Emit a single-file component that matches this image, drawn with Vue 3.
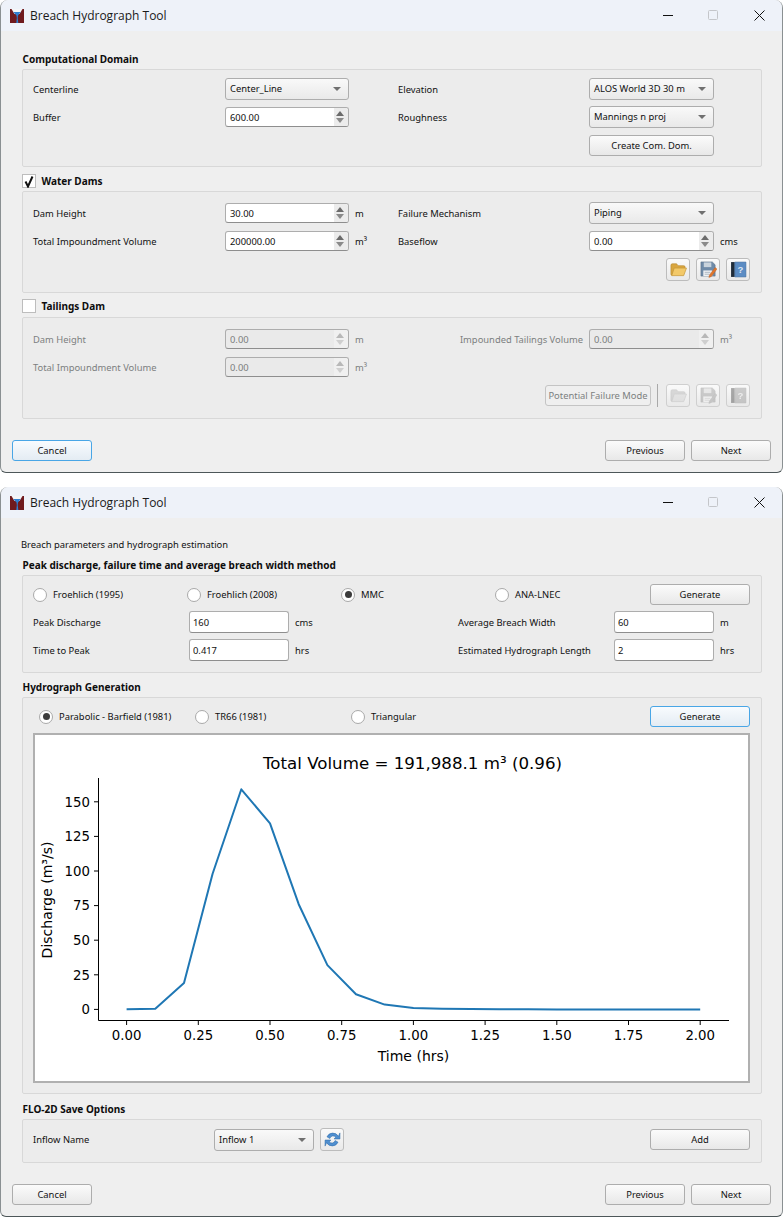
<script setup>
const points = [
  [0, 0.1], [0.1, 0.5], [0.2, 19], [0.3, 98], [0.4, 159], [0.5, 134.5], [0.6, 76], [0.7, 32],
  [0.8, 11], [0.9, 3.5], [1, 1], [1.1, 0.4], [1.2, 0.2], [1.3, 0.1], [1.4, 0.05], [1.5, 0],
  [1.6, 0], [1.7, 0], [1.8, 0], [1.9, 0], [2, 0],
]
const toX = (t) => 126.6 + 286.8 * t
const toY = (q) => 1009.4 - 1.384 * q
const linePoints = points.map(([t, q]) => `${toX(t).toFixed(1)},${toY(q).toFixed(1)}`).join(' ')
const xTicks = ['0.00', '0.25', '0.50', '0.75', '1.00', '1.25', '1.50', '1.75', '2.00']
const yTicks = [0, 25, 50, 75, 100, 125, 150]
const toolIcons = ['#ic-open', '#ic-save', '#ic-help']
const peakMethods = [
  { label: 'Froehlich (1995)', on: false },
  { label: 'Froehlich (2008)', on: false },
  { label: 'MMC', on: true },
  { label: 'ANA-LNEC', on: false },
]
const shapes = [
  { label: 'Parabolic - Barfield (1981)', on: true },
  { label: 'TR66 (1981)', on: false },
  { label: 'Triangular', on: false },
]
</script>

<template>
  <div class="page">
    <svg class="defs" width="0" height="0">
      <defs>
        <symbol id="ic-logo" viewBox="0 0 14 14">
          <path d="M0 0h14v14H0z" fill="#6f1a1e" />
          <path d="M1.5 0h11L9.5 5H4.500z" fill="#f4f6f8" />
          <path d="M3.200 3h7.600L8 6.500 7.700 9 8.300 14H6.300L6.800 9 6.500 6.500z" fill="#2f7fd0" />
        </symbol>
        <symbol id="ic-open" viewBox="0 0 18 16">
          <path d="M1 3.500Q1 2 2.500 2H7l1.500 2H14.500Q16 4 16 5.500V7H5L2.500 14H2Q1 14 1 13z" fill="#d9a63f" stroke="#b98a33" stroke-width=".7" />
          <path d="M4.500 6.500H17.500L14.500 14.500H1.800z" fill="#f3c969" stroke="#c29437" stroke-width=".7" />
        </symbol>
        <symbol id="ic-save" viewBox="0 0 18 18">
          <path d="M1 1h12l3 3v12H1z" fill="#6f8ba8" stroke="#5a6f86" stroke-width=".6" />
          <path d="M4 1.500h8v5H4z" fill="#c9d3dc" />
          <path d="M3.500 10h9.500v6H3.500z" fill="#eef1f4" />
          <path d="M5 12h6M5 14h5" stroke="#9aa7b4" stroke-width=".8" />
          <path d="M16 7l2 1.500-6 8-2.600 1 .6-2.800z" fill="#e0762b" stroke="#b9551a" stroke-width=".4" />
        </symbol>
        <symbol id="ic-help" viewBox="0 0 16 16">
          <path d="M1 1h3.500v14H1z" fill="#1f2c3a" />
          <path d="M4.500 1H15v14H4.500z" fill="#5b8cc4" stroke="#3f6a9c" stroke-width=".5" />
          <text x="9.700" y="11" font-size="9" font-family="Liberation Sans, sans-serif" font-weight="700" fill="#dbe7f4" text-anchor="middle">?</text>
        </symbol>
        <symbol id="ic-refresh" viewBox="0 0 16 16">
          <path d="M13.500 5A6 6 0 0 0 2.800 5.500L5.500 7A3.200 3.200 0 0 1 11 5.800L9.500 7.500H15V1.800z" fill="#4f8fd0" stroke="#2f6ba8" stroke-width=".5" />
          <path d="M2.500 11A6 6 0 0 0 13.200 10.500L10.500 9A3.200 3.200 0 0 1 5 10.200L6.500 8.500H1V14.200z" fill="#4f8fd0" stroke="#2f6ba8" stroke-width=".5" />
        </symbol>
      </defs>
    </svg>

    <!-- first wizard page -->
    <section class="window win-a">
      <header class="titlebar">
        <svg class="logo"><use href="#ic-logo" /></svg>
        <span class="title">Breach Hydrograph Tool</span>
        <div class="win-controls">
          <span class="ctl"><svg width="10" height="10"><path d="M0 5.500h10" stroke="#111" /></svg></span>
          <span class="ctl"><svg width="10" height="10"><rect x=".5" y=".5" width="9" height="9" rx="1" fill="none" stroke="#c4c6ca" /></svg></span>
          <span class="ctl"><svg width="11" height="11"><path d="M.5.500l10 10M10.500.500l-10 10" stroke="#111" /></svg></span>
        </div>
      </header>
      <div class="body body-a">
        <h3 class="head">Computational Domain</h3>
        <div class="group form-grid pad-first">
          <label>Centerline</label>
          <div class="combo">Center_Line</div>
          <span></span>
          <label>Elevation</label>
          <div class="combo">ALOS World 3D 30 m</div>
          <span></span>

          <label>Buffer</label>
          <div class="spin"><input value="600.00" readonly /><i class="arrows"></i></div>
          <span></span>
          <label>Roughness</label>
          <div class="combo">Mannings n proj</div>
          <span></span>

          <span class="skip"></span>
          <button class="btn create">Create Com. Dom.</button>
        </div>

        <div class="check-head first">
          <span class="check"><svg width="12" height="13"><path d="M2.500 6.500L5 11.500 9.500 1.500" fill="none" stroke="#111" stroke-width="2" /></svg></span>
          <h3>Water Dams</h3>
        </div>
        <div class="group form-grid pad-dam">
          <label>Dam Height</label>
          <div class="spin"><input value="30.00" readonly /><i class="arrows"></i></div>
          <span class="unit">m</span>
          <label>Failure Mechanism</label>
          <div class="combo">Piping</div>
          <span></span>

          <label>Total Impoundment Volume</label>
          <div class="spin"><input value="200000.00" readonly /><i class="arrows"></i></div>
          <span class="unit">m³</span>
          <label>Baseflow</label>
          <div class="spin"><input value="0.00" readonly /><i class="arrows"></i></div>
          <span class="unit">cms</span>

          <div class="tools">
            <button v-for="icon in toolIcons" :key="icon" class="tool"><svg><use :href="icon" /></svg></button>
          </div>
        </div>

        <div class="check-head second">
          <span class="check"></span>
          <h3>Tailings Dam</h3>
        </div>
        <div class="group form-grid pad-dam off">
          <label>Dam Height</label>
          <div class="spin"><input value="0.00" readonly /><i class="arrows"></i></div>
          <span class="unit">m</span>
          <label class="right">Impounded Tailings Volume</label>
          <div class="spin"><input value="0.00" readonly /><i class="arrows"></i></div>
          <span class="unit">m³</span>

          <label>Total Impoundment Volume</label>
          <div class="spin"><input value="0.00" readonly /><i class="arrows"></i></div>
          <span class="unit">m³</span>
          <span class="skip-rest"></span>

          <div class="tools">
            <button class="btn pfm">Potential Failure Mode</button>
            <span class="sep"></span>
            <button v-for="icon in toolIcons" :key="icon" class="tool"><svg><use :href="icon" /></svg></button>
          </div>
        </div>
      </div>
      <footer class="footer">
        <button class="btn nav focus">Cancel</button>
        <button class="btn nav push">Previous</button>
        <button class="btn nav">Next</button>
      </footer>
    </section>

    <!-- second wizard page -->
    <section class="window win-b">
      <header class="titlebar">
        <svg class="logo"><use href="#ic-logo" /></svg>
        <span class="title">Breach Hydrograph Tool</span>
        <div class="win-controls">
          <span class="ctl"><svg width="10" height="10"><path d="M0 5.500h10" stroke="#111" /></svg></span>
          <span class="ctl"><svg width="10" height="10"><rect x=".5" y=".5" width="9" height="9" rx="1" fill="none" stroke="#c4c6ca" /></svg></span>
          <span class="ctl"><svg width="11" height="11"><path d="M.5.500l10 10M10.500.500l-10 10" stroke="#111" /></svg></span>
        </div>
      </header>
      <div class="body body-b">
        <p class="intro">Breach parameters and hydrograph estimation</p>
        <h3 class="head">Peak discharge, failure time and average breach width method</h3>
        <div class="group peak">
          <div class="radio-row">
            <span v-for="m in peakMethods" :key="m.label" class="radio-item">
              <i class="radio" :class="{ on: m.on }"></i>{{ m.label }}
            </span>
            <button class="btn gen">Generate</button>
          </div>
          <div class="peak-grid">
            <label>Peak Discharge</label>
            <input class="line" value="160" readonly />
            <span class="unit">cms</span>
            <label>Average Breach Width</label>
            <input class="line" value="60" readonly />
            <span class="unit">m</span>

            <label>Time to Peak</label>
            <input class="line" value="0.417" readonly />
            <span class="unit">hrs</span>
            <label>Estimated Hydrograph Length</label>
            <input class="line" value="2" readonly />
            <span class="unit">hrs</span>
          </div>
        </div>

        <h3 class="head head-gen">Hydrograph Generation</h3>
        <div class="group hydro">
          <div class="radio-row shapes">
            <span v-for="s in shapes" :key="s.label" class="radio-item">
              <i class="radio" :class="{ on: s.on }"></i>{{ s.label }}
            </span>
            <button class="btn gen focus">Generate</button>
          </div>
          <div class="plot">
            <svg class="chart" viewBox="35 735 713 346" width="713" height="346">
              <text x="412.500" y="769" class="c-title" text-anchor="middle">Total Volume = 191,988.1 m³ (0.96)</text>
              <path d="M98.500 778V1020.500H729" fill="none" stroke="#000" />
              <g v-for="(tick, i) in xTicks" :key="tick">
                <path :d="`M${toX(i * 0.25).toFixed(1)} 1020.500v4.500`" stroke="#000" />
                <text :x="toX(i * 0.25)" y="1040" class="c-text" text-anchor="middle">{{ tick }}</text>
              </g>
              <g v-for="q in yTicks" :key="q">
                <path :d="`M98.500 ${toY(q).toFixed(1)}h-4.500`" stroke="#000" />
                <text x="90" :y="toY(q) + 4.800" class="c-text" text-anchor="end">{{ q }}</text>
              </g>
              <polyline :points="linePoints" fill="none" stroke="#1f77b4" stroke-width="2" stroke-linejoin="round" />
              <text x="413.500" y="1061" class="c-label" text-anchor="middle">Time (hrs)</text>
              <text transform="translate(52 900) rotate(-90)" class="c-label" text-anchor="middle">Discharge (m³/s)</text>
            </svg>
          </div>
        </div>

        <h3 class="head head-save">FLO-2D Save Options</h3>
        <div class="group save">
          <label>Inflow Name</label>
          <div class="combo inflow">Inflow 1</div>
          <button class="tool refresh"><svg><use href="#ic-refresh" /></svg></button>
          <button class="btn gen add">Add</button>
        </div>
      </div>
      <footer class="footer">
        <button class="btn nav">Cancel</button>
        <button class="btn nav push">Previous</button>
        <button class="btn nav">Next</button>
      </footer>
    </section>
  </div>
</template>

<style>
html,
body {
  margin: 0;
  background: #fff;
}
</style>

<style scoped>
.page {
  width: 783px;
  font-family: 'Noto Sans', 'Open Sans', sans-serif;
  font-size: 9.400px;
  color: #111;
}
.defs {
  position: absolute;
}
.window {
  box-sizing: border-box;
  width: 783px;
  background: #efefef;
  border: 1px solid #8a9092;
  border-top: 0;
  border-bottom-color: #4d5759;
  border-radius: 8px 8px 6px 6px;
  overflow: hidden;
}
.win-b {
  margin-top: 14px;
}
.titlebar {
  display: flex;
  align-items: center;
  height: 31px;
  background: #eef2f9;
}
.logo {
  width: 14px;
  height: 14px;
  margin-left: 9px;
}
.title {
  margin-left: 6px;
  font-family: 'Open Sans', sans-serif;
  font-size: 12px;
  color: #1a1a1a;
}
.win-controls {
  display: flex;
  align-self: flex-start;
  margin-left: auto;
}
.ctl {
  box-sizing: border-box;
  display: flex;
  align-items: center;
  justify-content: center;
  width: 45px;
  height: 30px;
}
.ctl:not(:last-child) {
  padding-right: 3px;
}
.body {
  padding: 0 20px 0 21px;
}
.body-a {
  padding-top: 21px;
}
.body-b {
  padding-top: 20px;
}
.head,
.check-head h3 {
  margin: 0;
  font-size: 10px;
  line-height: 14px;
  font-weight: 700;
  color: #0d0d0d;
}
.head {
  margin-bottom: 3px;
  padding-left: 0.5px;
}
.intro {
  margin: 0 0 6px -1px;
  line-height: 14px;
}
.head-gen {
  margin-top: 7px;
}
.head-save {
  margin-top: 8px;
}
.check-head {
  display: flex;
  align-items: center;
  height: 14px;
}
.check-head.first {
  margin: 7px 0 3px;
}
.check-head.second {
  margin: 6px 0 4px;
}
.check-head h3 {
  margin-left: 5.500px;
}
.check {
  box-sizing: border-box;
  display: flex;
  align-items: center;
  justify-content: center;
  width: 14px;
  height: 14px;
  background: #fff;
  border: 1px solid #bdbdbd;
}
.group {
  border: 1px solid #d8d8d8;
  border-radius: 2px;
  background: #ececec;
}
.form-grid {
  display: grid;
  grid-template-columns: 192px 124px 49px 191px 125px 1fr;
  grid-auto-rows: 22px;
  row-gap: 6px;
  align-items: center;
  padding: 0 0 10px 10px;
}
.pad-first {
  padding-top: 8px;
}
.pad-dam {
  padding-top: 10px;
  padding-bottom: 12px;
}
.skip {
  grid-column: 1 / 5;
}
.create {
  height: 21px;
}
.skip-rest {
  grid-column: 4 / 7;
}
.tools {
  grid-column: 1 / -1;
  align-self: start;
  display: flex;
  align-items: center;
  justify-content: flex-end;
  gap: 6px;
  height: 23px;
  padding-right: 11px;
}
.unit {
  padding-left: 6px;
}
.right {
  text-align: right;
  padding-right: 6px;
  margin-left: -20px;
}
.combo {
  box-sizing: border-box;
  position: relative;
  height: 22px;
  line-height: 20px;
  padding-left: 4px;
  border: 1px solid #adadad;
  border-radius: 3px;
  background: linear-gradient(#f9f9f9, #e9e9e9);
}
.combo::after {
  content: '';
  position: absolute;
  right: 7px;
  top: 8px;
  border-left: 4px solid transparent;
  border-right: 4px solid transparent;
  border-top: 4px solid #707070;
}
.spin {
  box-sizing: border-box;
  position: relative;
  display: flex;
  height: 20px;
  border: 1px solid #adadad;
  border-bottom-color: #8e8e8e;
  border-radius: 3px;
  background: #fff;
  overflow: hidden;
}
.spin input,
.line {
  font: inherit;
  color: inherit;
  outline: none;
  background: transparent;
}
.spin input {
  flex: 1;
  min-width: 0;
  border: 0;
  padding: 0 0 0 4px;
}
.arrows {
  position: relative;
  width: 14px;
  background: #ececec;
}
.arrows::before,
.arrows::after {
  content: '';
  position: absolute;
  left: 2px;
  border-left: 4px solid transparent;
  border-right: 4px solid transparent;
}
.arrows::before {
  top: 3px;
  border-bottom: 5px solid #6b6b6b;
}
.arrows::after {
  bottom: 3px;
  border-top: 5px solid #8a8a8a;
}
.btn {
  box-sizing: border-box;
  font: inherit;
  color: #111;
  padding: 0;
  white-space: nowrap;
  border: 1px solid #adadad;
  border-radius: 3px;
  background: linear-gradient(#fbfbfb, #e8e8e8);
}
.btn.focus {
  border-color: #49a6e6;
  background: linear-gradient(#f8fbfe, #e4ecf3);
}
.tool {
  box-sizing: border-box;
  display: flex;
  align-items: center;
  justify-content: center;
  width: 24px;
  height: 23px;
  padding: 0;
  border: 1px solid #bcbcbc;
  border-radius: 3px;
  background: linear-gradient(#fafafa, #e9e9e9);
}
.tool svg {
  width: 17px;
  height: 17px;
}
.off label,
.off .unit,
.off .spin input,
.off .btn {
  color: #7c7f80;
}
.off .spin {
  background: #eaeaea;
}
.off .arrows {
  background: #f0f0f0;
}
.off .arrows::before {
  border-bottom-color: #b8b8b8;
}
.off .arrows::after {
  border-top-color: #cfcfcf;
}
.off .tool {
  border-color: #cfcfcf;
}
.off .tool svg {
  filter: grayscale(1);
  opacity: 0.38;
}
.pfm {
  width: 106px;
  height: 21px;
  background: #efefef;
  border-color: #c4c4c4;
}
.sep {
  width: 1px;
  height: 23px;
  margin-right: 2px;
  background: #a9a9a9;
}
.footer {
  display: flex;
  gap: 6px;
  padding: 21px 11px 11px 11px;
}
.nav {
  width: 80px;
  height: 21px;
}
.push {
  margin-left: auto;
}
.radio-row {
  display: flex;
  align-items: center;
  height: 21px;
}
.radio-item {
  display: flex;
  align-items: center;
  gap: 6px;
  width: 154px;
}
.radio {
  box-sizing: border-box;
  position: relative;
  display: block;
  flex: none;
  width: 14px;
  height: 14px;
  border: 1px solid #a9a9a9;
  border-radius: 50%;
  background: #fff;
}
.radio.on::after {
  content: '';
  position: absolute;
  left: 2.500px;
  top: 2.500px;
  width: 7px;
  height: 7px;
  border-radius: 50%;
  background: #3c3c3c;
}
.gen {
  width: 100px;
  height: 21px;
  margin-left: auto;
}
.peak {
  padding: 8px 11px 11px 10px;
}
.peak-grid {
  display: grid;
  grid-template-columns: 156px 100px 169px 156px 100px 1fr;
  grid-auto-rows: 22px;
  row-gap: 6px;
  align-items: center;
  margin-top: 6px;
}
.line {
  box-sizing: border-box;
  width: 100px;
  height: 22px;
  padding: 0 0 0 3px;
  border: 1px solid #adadad;
  border-bottom-color: #8e8e8e;
  border-radius: 3px;
  background: #fff;
}
.hydro {
  padding: 8px 11px 10px 10px;
}
.shapes {
  padding-left: 6px;
}
.shapes .radio-item {
  width: 156px;
}
.plot {
  box-sizing: border-box;
  height: 350px;
  margin-top: 6px;
  border: 2px solid #b0b0b0;
  background: #fff;
}
.chart {
  display: block;
  font-family: 'DejaVu Sans', sans-serif;
}
.c-title {
  font-size: 16.670px;
}
.c-text {
  font-size: 13.300px;
}
.c-label {
  font-size: 14px;
}
.save {
  display: flex;
  align-items: center;
  padding: 8px 11px 11px 10px;
}
.save label {
  width: 181px;
}
.inflow {
  width: 100px;
}
.refresh {
  margin-left: 6px;
}
.add {
  height: 21px;
}
</style>
